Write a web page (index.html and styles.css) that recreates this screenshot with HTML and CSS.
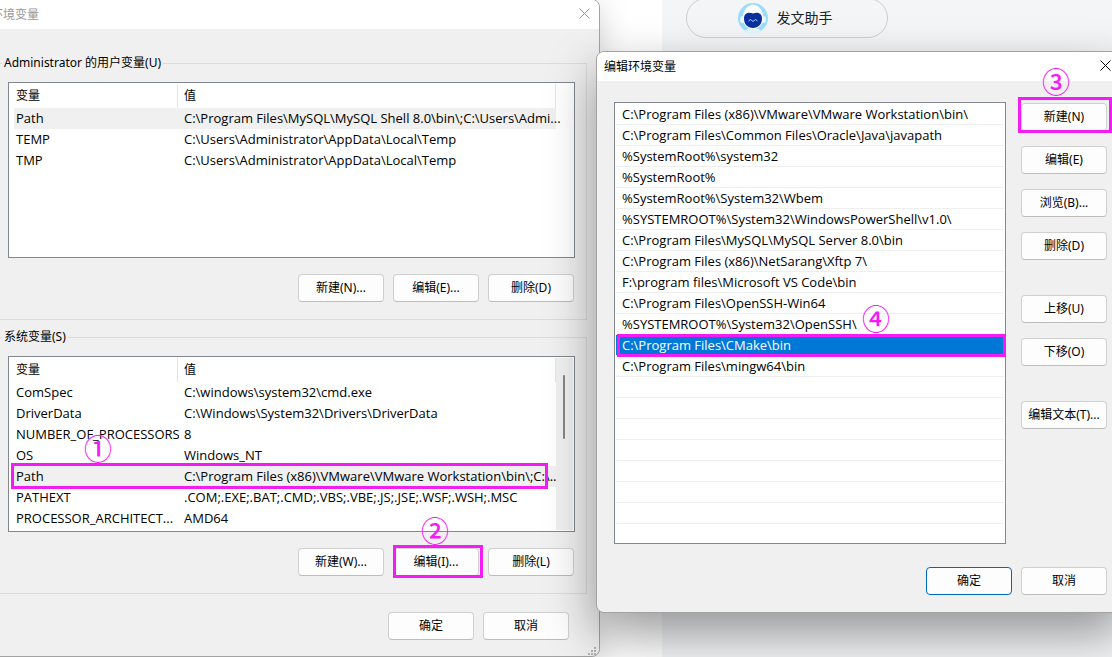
FILE: index.html
```html
<!DOCTYPE html>
<html lang="zh-CN">
<head>
    <meta charset="UTF-8">
    <meta name="viewport" content="width=device-width, initial-scale=1.0">
    <title>环境变量</title>
    <link rel="stylesheet" href="styles.css">
</head>
<body>
    <div class="desktop">
        <aside class="page-side">
            <button class="helper">
                <svg width="30" height="32" viewBox="0 0 30 32" aria-hidden="true">
                    <circle cx="15" cy="16" r="15" fill="#9bdcfd"/>
                    <path d="M7 29q2-3 8-3t8 3l-1 2q-7 2-14 0z" fill="#e4f6ff"/>
                    <rect x="2" y="14" width="26" height="7" rx="3" fill="#e8f7ff"/>
                    <path d="M11 4q4-3 8 0c4 2 6 6 6 12 0 7-4 11-10 11S5 23 5 16C5 10 7 6 11 4z" fill="#fff"/>
                    <path d="M15 11.500c3-1.500 9-1.500 9 5 0 6-4 9.500-9 9.500s-9-3.500-9-9.500c0-6.500 6-6.500 9-5z" fill="#0b2f9f"/>
                    <path d="M10.500 19l2-1.500 2.500 2 2.500-2 2 1.500" fill="none" stroke="#9bdcfd"/>
                </svg>
                <span>发文助手</span>
            </button>
        </aside>

        <!-- 环境变量 -->
        <section class="window window-env">
            <header class="titlebar inactive">
                <span>环境变量</span>
                <button class="close" aria-label="关闭">
                    <svg width="11" height="11" viewBox="0 0 11 11"><path d="M.5.5l10 10M10.500.5l-10 10"/></svg>
                </button>
            </header>
            <div class="window-body">
                <fieldset class="group">
                    <legend>Administrator 的用户变量(U)</legend>
                    <div class="list">
                        <table>
                            <thead>
                                <tr><th class="name">变量</th><th>值</th></tr>
                            </thead>
                            <tbody>
                                <tr class="selected"><td>Path</td><td>C:\Program Files\MySQL\MySQL Shell 8.0\bin\;C:\Users\Admi...</td></tr>
                                <tr><td>TEMP</td><td>C:\Users\Administrator\AppData\Local\Temp</td></tr>
                                <tr><td>TMP</td><td>C:\Users\Administrator\AppData\Local\Temp</td></tr>
                            </tbody>
                        </table>
                        <div class="scroll"></div>
                    </div>
                    <div class="buttons">
                        <button class="btn">新建(N)...</button>
                        <button class="btn">编辑(E)...</button>
                        <button class="btn">删除(D)</button>
                    </div>
                </fieldset>

                <fieldset class="group">
                    <legend>系统变量(S)</legend>
                    <div class="list">
                        <table>
                            <thead>
                                <tr><th class="name">变量</th><th>值</th></tr>
                            </thead>
                            <tbody>
                                <tr><td>ComSpec</td><td>C:\windows\system32\cmd.exe</td></tr>
                                <tr><td>DriverData</td><td>C:\Windows\System32\Drivers\DriverData</td></tr>
                                <tr><td>NUMBER_OF_PROCESSORS</td><td>8</td></tr>
                                <tr><td>OS</td><td>Windows_NT</td></tr>
                                <tr class="selected"><td>Path</td><td>C:\Program Files (x86)\VMware\VMware Workstation\bin\;C:\...</td></tr>
                                <tr><td>PATHEXT</td><td>.COM;.EXE;.BAT;.CMD;.VBS;.VBE;.JS;.JSE;.WSF;.WSH;.MSC</td></tr>
                                <tr><td>PROCESSOR_ARCHITECT...</td><td>AMD64</td></tr>
                            </tbody>
                        </table>
                        <div class="scroll bar"><div class="thumb"></div></div>
                        <div class="mark mark-path"></div>
                        <span class="step step-1">①</span>
                    </div>
                    <div class="buttons">
                        <button class="btn">新建(W)...</button>
                        <div class="marked">
                            <button class="btn">编辑(I)...</button>
                            <div class="mark mark-edit"></div>
                            <span class="step step-2">②</span>
                        </div>
                        <button class="btn">删除(L)</button>
                    </div>
                </fieldset>

                <footer class="buttons env-footer">
                    <button class="btn">确定</button>
                    <button class="btn">取消</button>
                </footer>
            </div>
            <svg class="grip" width="10" height="10" viewBox="0 0 10 10" fill="#b4b4b4" aria-hidden="true">
                <path d="M7 1h2v2H7zM4 4h2v2H4zM7 4h2v2H7zM1 7h2v2H1zM4 7h2v2H4zM7 7h2v2H7z"/>
            </svg>
        </section>

        <!-- 编辑环境变量 -->
        <section class="window window-edit">
            <header class="titlebar">
                <span>编辑环境变量</span>
                <button class="close" aria-label="关闭">
                    <svg width="11" height="11" viewBox="0 0 11 11"><path d="M.5.5l10 10M10.500.5l-10 10"/></svg>
                </button>
            </header>
            <div class="window-body">
                <div class="editor">
                    <ul class="paths">
                        <li>C:\Program Files (x86)\VMware\VMware Workstation\bin\</li>
                        <li>C:\Program Files\Common Files\Oracle\Java\javapath</li>
                        <li>%SystemRoot%\system32</li>
                        <li>%SystemRoot%</li>
                        <li>%SystemRoot%\System32\Wbem</li>
                        <li>%SYSTEMROOT%\System32\WindowsPowerShell\v1.0\</li>
                        <li>C:\Program Files\MySQL\MySQL Server 8.0\bin</li>
                        <li>C:\Program Files (x86)\NetSarang\Xftp 7\</li>
                        <li>F:\program files\Microsoft VS Code\bin</li>
                        <li>C:\Program Files\OpenSSH-Win64</li>
                        <li>%SYSTEMROOT%\System32\OpenSSH\</li>
                        <li class="current">C:\Program Files\CMake\bin<span class="mark mark-cmake"></span><span class="step step-4">④</span></li>
                        <li>C:\Program Files\mingw64\bin</li>
                        <li></li>
                        <li></li>
                        <li></li>
                        <li></li>
                        <li></li>
                        <li></li>
                        <li></li>
                        <li></li>
                    </ul>
                    <div class="actions">
                        <div class="marked">
                            <button class="btn">新建(N)</button>
                            <div class="mark mark-new"></div>
                            <span class="step step-3">③</span>
                        </div>
                        <button class="btn">编辑(E)</button>
                        <button class="btn">浏览(B)...</button>
                        <button class="btn">删除(D)</button>
                        <button class="btn spaced">上移(U)</button>
                        <button class="btn">下移(O)</button>
                        <button class="btn spaced">编辑文本(T)...</button>
                    </div>
                </div>
                <footer class="buttons edit-footer">
                    <button class="btn default">确定</button>
                    <button class="btn">取消</button>
                </footer>
            </div>
        </section>
    </div>
</body>
</html>
```
FILE: styles.css
```css
* {
    box-sizing: border-box;
}

body {
    margin: 0;
    background: #fff;
    color: #000;
    font-family: "Noto Sans", "Noto Sans CJK SC", sans-serif;
    font-size: 12px;
    line-height: 18px;
}

button {
    font: inherit;
    color: inherit;
}

.desktop {
    position: relative;
    display: flex;
    justify-content: flex-end;
    min-height: 100vh;
    overflow: hidden;
}

/* page behind the windows */
.page-side {
    width: 450px;
    padding: 0 24px;
    background: #f4f5f7;
}

.helper {
    display: flex;
    align-items: center;
    justify-content: center;
    gap: 9px;
    width: 202px;
    height: 40px;
    margin-top: -2px;
    padding: 0 10px 0 6px;
    border: 1px solid #ccced2;
    border-radius: 20px;
    background: transparent;
    color: #222226;
    font-size: 14px;
}

/* windows */
.window {
    position: absolute;
    border: 1px solid #a3a3a3;
    border-radius: 8px;
    background: #f0f0f0;
}

.window-env {
    top: -1px;
    left: -17px;
    right: 512px;
    box-shadow: 0 8px 32px rgba(0, 0, 0, 0.2);
}

.window-edit {
    top: 51px;
    left: 596px;
    right: -13px;
    box-shadow: 0 21px 50px rgba(0, 0, 0, 0.4);
}

.titlebar {
    display: flex;
    align-items: center;
    justify-content: space-between;
    height: 29px;
    padding: 0 13px 0 7px;
    border-radius: 7px 7px 0 0;
    background: #fff;
}

.titlebar.inactive {
    padding-right: 9px;
    color: #999;
}

.close {
    display: flex;
    padding: 0 0 2px;
    border: 0;
    background: none;
}

.close svg {
    fill: none;
    stroke: currentColor;
}

.window-env .window-body {
    padding: 25px 12px 16px;
}

.window-edit .window-body {
    padding: 21px 17px 17px;
}

.group {
    min-width: 0;
    margin: 0 0 8px;
    padding: 10px 11px 17px;
    border: 1px solid #dcdcdc;
}

.group legend {
    margin-left: -6px;
    padding: 0 2px;
}

/* variable lists */
.list {
    position: relative;
    display: flex;
    height: 176px;
    padding: 1px 1px 1px 5px;
    border: 1px solid #828790;
    background: #fff;
}

.list table {
    flex: 1;
    align-self: flex-start;
    width: 100%;
    min-width: 0;
    table-layout: fixed;
    border-collapse: separate;
    border-spacing: 0;
    white-space: nowrap;
}

.list th {
    height: 24px;
    padding: 0 6px;
    border-right: 1px solid #e5e5e5;
    font-weight: normal;
    text-align: left;
}

.list .name {
    width: 164px;
}

.list td {
    height: 21px;
    padding: 0 0 1px 6px;
}

.list td,
.paths {
    font-family: "Open Sans", "Noto Sans CJK SC", sans-serif;
    font-size: 13px;
}

.list th:first-child,
.list td:first-child {
    padding-left: 2px;
}

.selected {
    background: #f0f0f0;
}

.scroll {
    flex: none;
    width: 17px;
}

.bar {
    padding: 17px 7px;
    background: #f0f0f0;
}

.thumb {
    width: 2px;
    height: 64px;
    border-radius: 1px;
    background: #858585;
}

/* buttons */
.btn {
    display: block;
    width: 86px;
    height: 28px;
    padding: 0;
    border: 1px solid #d0d0d0;
    border-bottom-color: #bcbcbc;
    border-radius: 4px;
    background: #fdfdfd;
    white-space: nowrap;
}

.btn.default {
    border-color: #0067c0;
}

.buttons {
    display: flex;
    justify-content: flex-end;
    gap: 9px;
}

.group .buttons {
    margin: 16px 1px 0 0;
}

.env-footer {
    margin: 18px 18px 0;
}

.edit-footer {
    margin-top: 23px;
}

.grip {
    position: absolute;
    right: 2px;
    bottom: 0;
}

/* path editor */
.editor {
    display: flex;
    gap: 15px;
}

.paths {
    flex: 1;
    height: 442px;
    margin: 0;
    padding: 1px;
    border: 1px solid #828790;
    background: #fff;
    list-style: none;
}

.paths li {
    position: relative;
    height: 21px;
    padding: 1px 6px;
    border-bottom: 1px solid #efefef;
}

.paths li:last-child {
    border-bottom: 0;
    height: 19px;
}

.paths .current {
    background: #0078d7;
    color: #fff;
}

.actions {
    display: flex;
    flex-direction: column;
    gap: 15px;
    padding-top: 1px;
}

.spaced {
    margin-top: 20px;
}

/* step marks */
.marked {
    position: relative;
}

.mark {
    position: absolute;
    border: 3px solid #f41cf4;
    pointer-events: none;
}

.mark-path {
    top: 106px;
    left: 2px;
    right: 26px;
    height: 26px;
}

.mark-edit {
    inset: -3px -4px -2px 0;
}

.mark-new {
    inset: -6px -5px -2px -3px;
}

.mark-cmake {
    inset: -1px -2px -2px 1px;
}

.step {
    position: absolute;
    width: 28px;
    color: #f41cf4;
    font-family: "Noto Sans CJK SC", sans-serif;
    font-size: 28px;
    font-weight: 500;
    line-height: 28px;
    text-align: center;
}

.step-1 {
    top: 77px;
    left: 75px;
}

.step-2 {
    top: -32px;
    left: 28px;
}

.step-3 {
    top: -36px;
    left: 21px;
}

.step-4 {
    top: -31px;
    left: 246px;
}
```
